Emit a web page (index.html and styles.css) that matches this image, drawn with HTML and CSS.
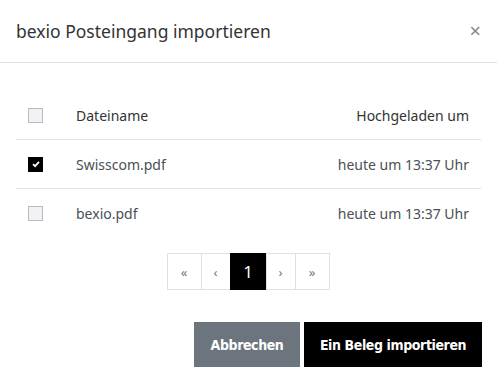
FILE: index.html
```html
<!DOCTYPE html>
<html lang="de">
<head>
    <meta charset="UTF-8">
    <meta name="viewport" content="width=device-width, initial-scale=1.0">
    <title>bexio Posteingang importieren</title>
    <link rel="stylesheet" href="styles.css">
</head>
<body>

    <div class="modal">
        <div class="modal-header">
            <h5 class="modal-title">bexio Posteingang importieren</h5>
            <button class="close" type="button">&times;</button>
        </div>

        <div class="modal-body">
            <table class="files">
                <tr>
                    <th class="check-col"><span class="checkbox"></span></th>
                    <th>Dateiname</th>
                    <th class="right">Hochgeladen um</th>
                </tr>
                <tr>
                    <td class="check-col"><span class="checkbox checked">
                        <svg width="10" height="10" viewBox="0 0 10 10"><path d="M2 5.2 L4.1 7.2 L8 2.8" fill="none" stroke="#fff" stroke-width="1.8"/></svg>
                    </span></td>
                    <td>Swisscom.pdf</td>
                    <td class="right">heute um 13:37 Uhr</td>
                </tr>
                <tr>
                    <td class="check-col"><span class="checkbox"></span></td>
                    <td>bexio.pdf</td>
                    <td class="right">heute um 13:37 Uhr</td>
                </tr>
            </table>

            <ul class="pagination">
                <li class="page wide">&laquo;</li>
                <li class="page">&lsaquo;</li>
                <li class="page active">1</li>
                <li class="page">&rsaquo;</li>
                <li class="page wide">&raquo;</li>
            </ul>
        </div>

        <div class="modal-footer">
            <button class="btn btn-secondary">Abbrechen</button>
            <button class="btn btn-dark">Ein Beleg importieren</button>
        </div>
    </div>

</body>
</html>
```

FILE: styles.css
```css
body {
    margin: 0;
    font-family: "Noto Sans", "Open Sans", sans-serif;
    color: #495057;
    background: #fff;
}

.modal {
    width: 497px;
}

.modal-header {
    display: flex;
    justify-content: space-between;
    align-items: center;
    padding: 16px;
    border-bottom: 1px solid #dee2e6;
}

.modal-title {
    margin: 0;
    font-size: 17.5px;
    font-weight: 400;
    line-height: 30px;
    color: #333;
}

.close {
    border: none;
    background: none;
    padding: 0;
    font-size: 20px;
    line-height: 1;
    color: #888;
    font-family: "Noto Sans", sans-serif;
}

.modal-body {
    padding: 28px 16px 0;
}

.files {
    width: 100%;
    border-collapse: collapse;
    font-size: 14px;
}

.files th, .files td {
    height: 48px;
    padding: 0 12px;
    text-align: left;
    font-weight: 400;
    border-bottom: 1px solid #dee2e6;
}

.files tr:last-child td {
    border-bottom: none;
}

.files th {
    color: #333;
}

.files .check-col {
    width: 24px;
}

.files .right {
    text-align: right;
}

.checkbox {
    display: flex;
    align-items: center;
    justify-content: center;
    box-sizing: border-box;
    width: 15px;
    height: 15px;
    background: #f1f2f4;
    border: 1px solid #b8bcc2;
}

.checkbox.checked {
    background: #000;
    border-color: #000;
}

.pagination {
    display: flex;
    justify-content: center;
    list-style: none;
    margin: 16px 0 0;
    padding: 0;
}

.page {
    width: 28px;
    height: 35px;
    display: flex;
    align-items: center;
    justify-content: center;
    border: 1px solid #dee2e6;
    margin-left: -1px;
    font-size: 13px;
    color: #70767c;
}

.page.wide {
    width: 33px;
}

.page.active {
    width: 35px;
    background: #000;
    border-color: #000;
    color: #fff;
    font-size: 17px;
}

.modal-footer {
    display: flex;
    justify-content: flex-end;
    gap: 4px;
    padding: 32px 15px 0;
}

.btn {
    height: 45px;
    border: none;
    color: #fff;
    font-family: "DejaVu Sans", sans-serif;
    font-weight: 700;
    font-stretch: semi-condensed;
    font-size: 14px;
    letter-spacing: -0.4px;
    white-space: nowrap;
    padding: 0;
}

.btn-secondary {
    background: #6c757d;
    width: 106px;
}

.btn-dark {
    background: #000;
    width: 178px;
}
```
